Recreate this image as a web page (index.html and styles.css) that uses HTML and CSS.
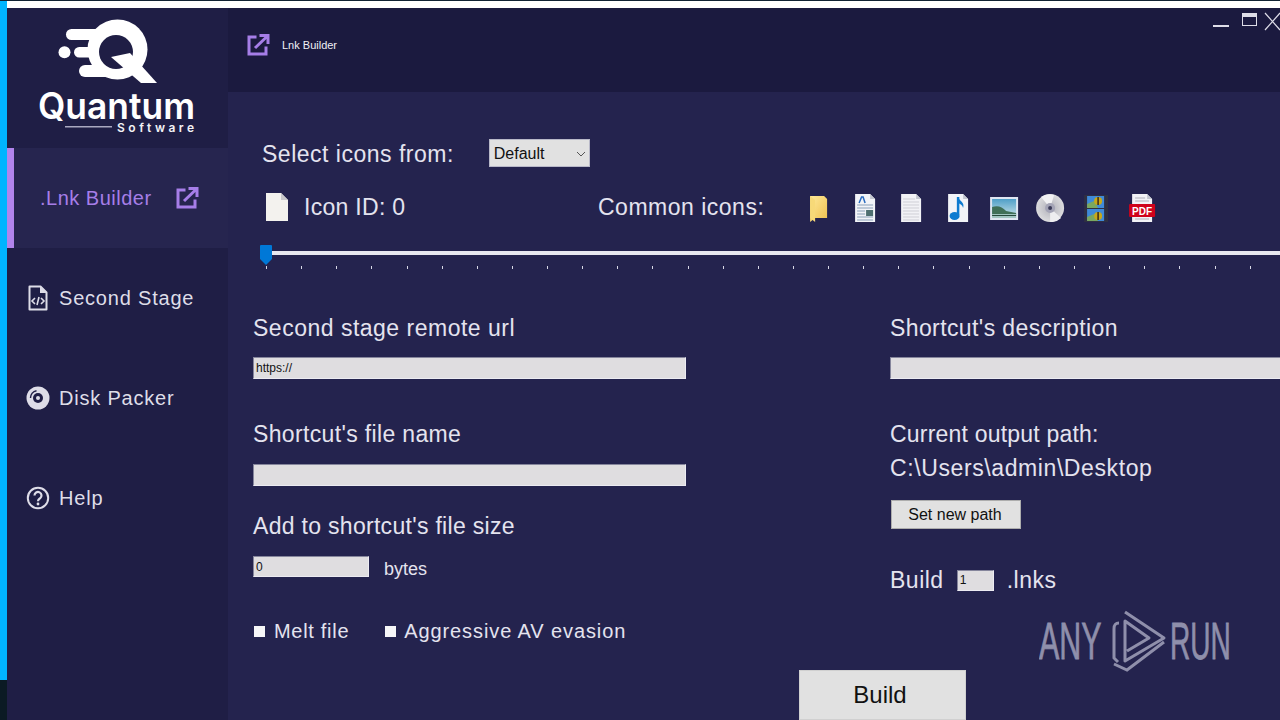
FILE: index.html
```html
<!DOCTYPE html>
<html lang="en">
<head>
    <meta charset="UTF-8">
    <title>Quantum Software - Lnk Builder</title>
    <link rel="stylesheet" href="styles.css">
</head>
<body>
    <div class="top-line"><div class="top-white"></div></div>
    <div class="desktop">
        <div class="strip"></div>

        <aside class="sidebar">
            <div class="logo">
                <svg width="221" height="140" viewBox="0 0 221 140">
                    <g transform="translate(-8,-8)">
                        <circle cx="65.500" cy="52.300" r="6" fill="#fff"/>
                        <rect x="67" y="29" width="48" height="11" rx="5.500" fill="#fff"/>
                        <rect x="75" y="47" width="30" height="10.500" rx="5.200" fill="#fff"/>
                        <rect x="80" y="65" width="40" height="12" rx="6" fill="#fff"/>
                        <circle cx="118.500" cy="49.500" r="30" fill="#fff"/>
                        <circle cx="117" cy="52" r="17" fill="#1f1e45"/>
                        <path d="M112 57 L131 53 L158 83 L142 83 Z" fill="#fff"/>
                        <text x="39" y="119" textLength="157" lengthAdjust="spacingAndGlyphs" class="logo-name">Quantum</text>
                        <rect x="66" y="126" width="47" height="1.500" fill="#a9a8c0"/>
                        <text x="118" y="132" textLength="77" class="logo-sub">Software</text>
                    </g>
                </svg>
            </div>
            <nav>
                <div class="nav-item active">
                    <span class="nav-text">.Lnk Builder</span>
                    <svg class="nav-ext" width="24" height="24" viewBox="0 0 24 24"><path d="M10.500 4H3v17h17v-7.500" fill="none" stroke="#a67ee8" stroke-width="3"/><path d="M9 15 21 3.500M13.500 2.500h8.500v8.500" fill="none" stroke="#a67ee8" stroke-width="3"/></svg>
                </div>
                <div class="nav-item">
                    <span class="nav-icon">
                        <svg width="24" height="26" viewBox="0 0 24 26"><path d="M3.500 1.500h11l6 6v17h-17z" fill="none" stroke="#dedde8" stroke-width="2" stroke-linejoin="round"/><path d="M14 1.500v6.500h6.500z" fill="#dedde8"/><path d="M9 13l-3 3 3 3M15 13l3 3-3 3M13 12l-2 8" fill="none" stroke="#dedde8" stroke-width="1.600"/></svg>
                    </span>
                    <span class="nav-text">Second Stage</span>
                </div>
                <div class="nav-item">
                    <span class="nav-icon">
                        <svg width="24" height="24" viewBox="0 0 24 24"><circle cx="12" cy="12" r="11.500" fill="#dedde8"/><circle cx="12" cy="12" r="5" fill="#1f1e45"/><circle cx="12" cy="12" r="2" fill="#dedde8"/><path d="M4.500 12a7.500 7.500 0 0 1 6-7.300" fill="none" stroke="#1f1e45" stroke-width="1.400"/></svg>
                    </span>
                    <span class="nav-text">Disk Packer</span>
                </div>
                <div class="nav-item">
                    <span class="nav-icon">
                        <svg width="24" height="24" viewBox="0 0 24 24"><circle cx="12" cy="12" r="10.200" fill="none" stroke="#dedde8" stroke-width="2"/><path d="M8.500 9.500a3.500 3.500 0 1 1 5.600 2.800c-1.300 1-2.100 1.500-2.100 3" fill="none" stroke="#dedde8" stroke-width="2.200"/><circle cx="12" cy="18" r="1.400" fill="#dedde8"/></svg>
                    </span>
                    <span class="nav-text">Help</span>
                </div>
            </nav>
        </aside>

        <main class="main">
            <header class="titlebar">
                <svg width="24" height="24" viewBox="0 0 24 24"><path d="M10.500 4H3v17h17v-7.500" fill="none" stroke="#a67ee8" stroke-width="3"/><path d="M9 15 21 3.500M13.500 2.500h8.500v8.500" fill="none" stroke="#a67ee8" stroke-width="3"/></svg>
                <span class="title-text">Lnk Builder</span>
                <div class="win-buttons">
                    <svg width="67" height="24" viewBox="0 0 67 24">
                        <rect x="0" y="17" width="16" height="2" fill="#dedde8"/>
                        <rect x="29.500" y="5.500" width="14" height="12" fill="none" stroke="#dedde8"/>
                        <rect x="29" y="5" width="15" height="4" fill="#dedde8"/>
                        <path d="M52 5 67 22M67 5 52 22" stroke="#dedde8" stroke-width="1.200"/>
                    </svg>
                </div>
            </header>

            <section class="content">
                <div class="select-row">
                    <span class="label">Select icons from:</span>
                    <div class="select-wrap">
                        <select class="icon-select"><option>Default</option></select>
                        <svg class="select-arrow" width="10" height="6" viewBox="0 0 10 6"><path d="M1 1l4 4 4-4" fill="none" stroke="#555" stroke-width="1"/></svg>
                    </div>
                </div>

                <div class="icons-row">
                    <svg class="file-preview" width="22" height="28" viewBox="0 0 22 28"><path d="M0 0h15l7 7v21H0z" fill="#f3f2ee"/><path d="M15 0l7 7h-7z" fill="#c9c9cc"/></svg>
                    <span class="label icon-id">Icon ID: 0</span>
                    <span class="label common">Common icons:</span>
                    <div class="common-icons">
                        <svg width="24" height="30" viewBox="0 0 24 30"><defs><linearGradient id="fold" x1="0" y1="0" x2="1" y2="1"><stop offset="0" stop-color="#ffe99a"/><stop offset="1" stop-color="#eec04e"/></linearGradient></defs><path d="M3 3h14l3 3v19H8l-5 4z" fill="url(#fold)"/><path d="M3 3l5 4v22l-5-4z" fill="#f7d978"/></svg>
                        <svg width="24" height="30" viewBox="0 0 24 30"><path d="M2 1h15l5 5v23H2z" fill="#f2f4f8"/><path d="M17 1l5 5h-5z" fill="#c3c6d0"/><path d="M4 12h16M4 15h16M4 18h8M4 21h8M4 24h16M4 27h16" stroke="#8aa0b8"/><rect x="13" y="17" width="7" height="6" fill="#4e6f70"/><path d="M6 10l2.500-6h1.500l2 6" fill="none" stroke="#2a6cc0" stroke-width="1.500"/></svg>
                        <svg width="24" height="30" viewBox="0 0 24 30"><path d="M2 1h15l5 5v23H2z" fill="#f2f2f6"/><path d="M17 1l5 5h-5z" fill="#c3c6d0"/><path d="M4 6h12M4 9h16M4 12h16M4 15h16M4 18h16M4 21h16M4 24h16M4 27h16" stroke="#cfcfd6"/></svg>
                        <svg width="24" height="30" viewBox="0 0 24 30"><path d="M2 1h15l5 5v23H2z" fill="#f2f4f8"/><path d="M17 1l5 5h-5z" fill="#c3c6d0"/><path d="M12 4v18" stroke="#0d7bd0" stroke-width="2.500"/><ellipse cx="8.500" cy="23" rx="5" ry="4" fill="#0d7bd0"/><path d="M12 4c1 4 7 5 5 11-.5-3-3-4-5-5z" fill="#0d7bd0"/></svg>
                        <svg width="28" height="23" viewBox="0 0 28 23"><defs><linearGradient id="sky" x1="0" y1="0" x2="0" y2="1"><stop offset="0" stop-color="#4f9fc8"/><stop offset="1" stop-color="#cfe6ea"/></linearGradient></defs><rect width="28" height="23" fill="#dfe6f2"/><rect x="2" y="2" width="24" height="19" fill="url(#sky)"/><path d="M2 10c6-2 10 0 14 4l10 2v2H2z" fill="#3f6f58"/><path d="M2 17h24v4H2z" fill="#9fc4c0"/><path d="M2 18h24v1H2z" fill="#25483c"/></svg>
                        <svg width="28" height="28" viewBox="0 0 28 28"><defs><radialGradient id="disc"><stop offset="0.300" stop-color="#bdbdc4"/><stop offset="1" stop-color="#dcdcde"/></radialGradient></defs><circle cx="14" cy="14" r="14" fill="url(#disc)"/><path d="M14 14L5 3a14 14 0 0 1 13-2z" fill="#f2f2f4"/><path d="M14 14L25 24a14 14 0 0 1-11 4z" fill="#eeeef0"/><circle cx="14" cy="14" r="5" fill="#a4a4b6"/><circle cx="14" cy="14" r="2" fill="#3a3a58"/></svg>
                        <svg width="24" height="27" viewBox="0 0 24 27"><rect width="24" height="27" fill="#2f2f42"/><rect x="3" y="1" width="17" height="12" fill="#3f8ad8"/><rect x="3" y="14" width="17" height="12" fill="#3f8ad8"/><path d="M3 9l7-3 4 7H3zM3 22l7-3 4 7H3z" fill="#7aa860"/><circle cx="14" cy="6" r="4" fill="#c8a818"/><circle cx="14" cy="21" r="4" fill="#c8a818"/><path d="M14 2v8M14 17v8" stroke="#3a2a18" stroke-width="1.500"/></svg>
                        <svg width="26" height="28" viewBox="0 0 26 28"><path d="M3 0h15l5 5v23H3z" fill="#f2f2f6"/><path d="M18 0l5 5h-5z" fill="#c3c6d0"/><path d="M6 4h10M6 7h14M6 25h14" stroke="#b0b0ba"/><rect y="10" width="26" height="13" rx="1" fill="#d0021b"/><text x="13" y="20.500" text-anchor="middle" class="pdf-text">PDF</text></svg>
                    </div>
                </div>

                <div class="slider">
                    <svg class="thumb" width="12" height="20" viewBox="0 0 12 20"><path d="M1 0h10a1 1 0 0 1 1 1v13l-6 6-6-6V1a1 1 0 0 1 1-1z" fill="#0078d7"/></svg>
                    <div class="track"></div>
                    <div class="ticks"></div>
                </div>

                <div class="form-grid">
                    <div class="col">
                        <span class="label">Second stage remote url</span>
                        <input class="text-input wide first-input" type="text" value="https://">
                        <span class="label gap-40 tight-35">Shortcut's file name</span>
                        <input class="text-input wide second-input" type="text">
                        <span class="label gap-25 tight-30">Add to shortcut's file size</span>
                        <div class="bytes-row">
                            <input class="text-input size-input" type="text" value="0">
                            <span class="bytes">bytes</span>
                        </div>
                        <div class="checks">
                            <span class="check"></span><span class="check-label melt">Melt file</span>
                            <span class="check second-check"></span><span class="check-label">Aggressive AV evasion</span>
                        </div>
                    </div>
                    <div class="col">
                        <span class="label tight-40">Shortcut's description</span>
                        <input class="text-input desc-input first-input" type="text">
                        <span class="label gap-40 tight-20">Current output path:</span>
                        <span class="label path">C:\Users\admin\Desktop</span>
                        <button class="path-btn">Set new path</button>
                        <div class="build-count">
                            <span class="label">Build</span>
                            <input class="text-input count-input" type="text" value="1">
                            <span class="label">.lnks</span>
                        </div>
                    </div>
                </div>

                <button class="build-btn">Build</button>
            </section>
        </main>
    </div>

    <div class="taskbar-corner"></div>

    <svg class="watermark" width="200" height="64" viewBox="0 0 200 64">
        <text transform="translate(0,50) scale(0.585,1)" class="wm-text">ANY</text>
        <path d="M80 14c-4 0-5 2-5 6v29l4 4" fill="none" stroke="#8f8fab" stroke-width="3"/>
        <path d="M86 3 125 29 86 52V12l24 17-22 13" fill="none" stroke="#8f8fab" stroke-width="3" stroke-linejoin="round"/>
        <path d="M75 55l13 6 37-28" fill="none" stroke="#8f8fab" stroke-width="3"/>
        <text transform="translate(131,50) scale(0.54,1)" class="wm-text">RUN</text>
    </svg>
</body>
</html>
```

FILE: styles.css
```css
html, body {
    margin: 0;
    height: 720px;
    overflow: hidden;
}
body {
    font-family: "Liberation Sans", Arial, sans-serif;
    background: #24234e;
    color: #e4e3ef;
    position: relative;
}
.top-line {
    height: 8px;
    background: #00b4ff;
    border-top: 1px solid #123;
    box-sizing: border-box;
}
.top-white {
    height: 7px;
    margin-left: 7px;
    background: #fff;
}
.desktop {
    display: flex;
    height: 712px;
}
.strip {
    width: 7px;
    background: #00b4ff;
}
.taskbar-corner {
    position: absolute;
    left: 0;
    top: 680px;
    width: 7px;
    height: 40px;
    background: #0b1a24;
}

/* sidebar */
.sidebar {
    width: 221px;
    flex-shrink: 0;
    background: #1f1e45;
}
.logo {
    height: 140px;
}
.logo svg {
    display: block;
}
.logo-name {
    font-family: Inter, sans-serif;
    font-size: 37px;
    font-weight: 600;
    fill: #fff;
}
.logo-sub {
    font-family: Inter, sans-serif;
    font-size: 12px;
    font-weight: 600;
    fill: #f2f2f6;
}
.nav-item {
    height: 100px;
    display: flex;
    align-items: center;
    padding-left: 19px;
    box-sizing: border-box;
}
.nav-icon {
    width: 33px;
    display: flex;
}
.nav-text {
    font-size: 20px;
    letter-spacing: 0.8px;
    color: #dedde8;
}
.nav-item.active {
    background: #26254f;
    border-left: 7px solid #b184ec;
    padding-left: 26px;
}
.nav-item.active .nav-text {
    color: #a67ee8;
    letter-spacing: 0.5px;
}
.nav-ext {
    margin-left: 23px;
}

/* title bar */
.main {
    flex: 1;
    min-width: 0;
}
.titlebar {
    height: 84px;
    background: #1b1a3f;
    display: flex;
    align-items: center;
    padding-left: 18px;
    padding-bottom: 10px;
    box-sizing: border-box;
    position: relative;
}
.title-text {
    font-size: 11px;
    margin-left: 12px;
    color: #f0f0f6;
}
.win-buttons {
    position: absolute;
    right: 0;
    top: 0;
    height: 24px;
}
.win-buttons svg {
    display: block;
}

/* form */
.content {
    padding-top: 47px;
    height: 628px;
    box-sizing: border-box;
    overflow: hidden;
}
.label {
    font-size: 23px;
    line-height: 30px;
    letter-spacing: 0.5px;
    display: block;
    color: #e4e3ef;
}
.tight-20 { letter-spacing: 0.2px; }
.tight-30 { letter-spacing: 0.3px; }
.tight-35 { letter-spacing: 0.35px; }
.tight-40 { letter-spacing: 0.4px; }
.select-row {
    display: flex;
    align-items: center;
    height: 28px;
    padding-left: 34px;
}
.select-row .label {
    margin-top: 2px;
}
.select-wrap {
    position: relative;
    margin-left: 35px;
    display: flex;
}
.icon-select {
    appearance: none;
    width: 101px;
    height: 28px;
    background: #e1e1e1;
    border: 1px solid #b8b8c8;
    border-radius: 0;
    font-family: "Liberation Sans", Arial, sans-serif;
    font-size: 16px;
    padding: 0 4px;
    color: #111;
}
.select-arrow {
    position: absolute;
    right: 4px;
    top: 12px;
}
.icons-row {
    display: flex;
    align-items: center;
    height: 28px;
    margin-top: 26px;
    padding-left: 38px;
}
.icon-id {
    margin-left: 16px;
    width: 294px;
    letter-spacing: 0.3px;
}
.common {
    width: 197px;
}
.common-icons {
    display: flex;
    align-items: center;
    padding: 2px 0 0 1px;
}
.common-icons svg {
    width: 46.2px;
    flex-shrink: 0;
}
.slider {
    position: relative;
    height: 25px;
    margin-top: 24px;
    margin-left: 38px;
}
.track {
    position: absolute;
    left: 0;
    right: 0;
    top: 6px;
    height: 4px;
    background: #e8e8f0;
}
.thumb {
    position: absolute;
    left: -6px;
    top: 0;
    z-index: 1;
}
.ticks {
    position: absolute;
    left: 0;
    right: 0;
    top: 21px;
    height: 3px;
    background: repeating-linear-gradient(to right, #d8d8e6 0, #d8d8e6 1px, transparent 1px, transparent 35.13px);
}
.form-grid {
    display: grid;
    grid-template-columns: 637px 1fr;
    margin-top: 43px;
    padding-left: 25px;
}
.col {
    display: flex;
    flex-direction: column;
    align-items: flex-start;
    min-width: 0;
}
.gap-40 {
    margin-top: 40px;
}
.gap-25 {
    margin-top: 25px;
}
.text-input {
    box-sizing: border-box;
    height: 22px;
    background: #dfdde0;
    border: 1px solid;
    border-color: #85859c #ecebf2 #ecebf2 #85859c;
    border-radius: 0;
    padding: 0 2px;
    font-family: "Liberation Sans", Arial, sans-serif;
    font-size: 12px;
    color: #111;
    outline: none;
}
.wide {
    width: 433px;
}
.first-input {
    margin-top: 14px;
}
.second-input {
    margin-top: 15px;
}
.desc-input {
    width: 400px;
}
.bytes-row {
    display: flex;
    align-items: center;
    margin-top: 15px;
    height: 21px;
}
.size-input {
    width: 116px;
    height: 21px;
}
.bytes {
    font-size: 18px;
    margin-left: 15px;
    position: relative;
    top: 3px;
}
.checks {
    display: flex;
    align-items: center;
    height: 30px;
    margin-top: 39px;
}
.check {
    width: 11px;
    height: 11px;
    margin-left: 1px;
    background: #f6f6f8;
}
.check-label {
    font-size: 20px;
    letter-spacing: 0.9px;
    margin-left: 8px;
}
.check-label.melt {
    letter-spacing: 0.7px;
    margin-left: 9px;
}
.second-check {
    margin-left: 36px;
}
.path {
    margin-top: 4px;
    letter-spacing: 0.6px;
}
.path-btn {
    margin-top: 17px;
    margin-left: 1px;
    width: 130px;
    height: 29px;
    padding: 0 2px 0 0;
    background: #e1e1e1;
    border: 1px solid #adadad;
    font-family: "Liberation Sans", Arial, sans-serif;
    font-size: 16px;
    color: #111;
}
.build-count {
    display: flex;
    align-items: center;
    margin-top: 36px;
}
.count-input {
    width: 37px;
    height: 21px;
    margin: 0 13px;
}
.build-btn {
    display: block;
    margin-top: 24px;
    margin-left: 571px;
    width: 167px;
    height: 50px;
    padding: 0 5px 0 0;
    background: #e1e1e1;
    border: 1px solid #d0d0d0;
    font-family: "Liberation Sans", Arial, sans-serif;
    font-size: 24px;
    color: #111;
}
.pdf-text {
    font-family: "Liberation Sans", Arial, sans-serif;
    font-size: 10px;
    font-weight: bold;
    fill: #fff;
}

/* watermark */
.watermark {
    position: absolute;
    left: 1039px;
    top: 609px;
}
.wm-text {
    font-family: "Liberation Sans", Arial, sans-serif;
    font-size: 52px;
    fill: #8f8fab;
    stroke: #8f8fab;
    stroke-width: 0.8px;
}
```
